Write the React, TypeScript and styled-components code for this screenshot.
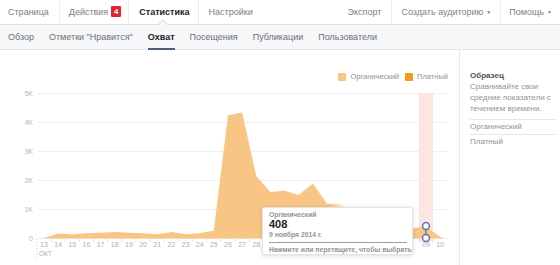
import React from "react";
import styled, { createGlobalStyle } from "styled-components";

const GlobalStyle = createGlobalStyle`
  html, body { margin: 0; padding: 0; background: #fff; }
  body { font-family: "Liberation Sans", Arial, sans-serif; }
  * { box-sizing: border-box; }
`;

const Page = styled.div`
  width: 560px;
  height: 265px;
  overflow: hidden;
  background: #fff;
  display: flex;
  flex-direction: column;
`;

const TopBar = styled.div`
  height: 25px;
  display: flex;
  align-items: stretch;
  background: #fff;
  border-bottom: 1px solid #dddfe2;
  font-size: 9px;
  position: relative;
  z-index: 2;
`;

const TopItem = styled.div<{ $active?: boolean; $sep?: boolean; $pl?: number; $pr?: number }>`
  position: relative;
  display: flex;
  align-items: center;
  padding: 0 ${(p) => p.$pr ?? 10}px 1px ${(p) => p.$pl ?? 10}px;
  color: ${(p) => (p.$active ? "#1d2129" : "#7b7f86")};
  font-weight: ${(p) => (p.$active ? 700 : 400)};
  border-right: ${(p) => (p.$sep ? "1px solid #eceef1" : "none")};
  white-space: nowrap;
  ${(p) =>
    p.$active &&
    `
    &::after {
      content: "";
      position: absolute;
      left: 50%;
      bottom: -1px;
      width: 7px;
      height: 7px;
      margin-left: -4px;
      background: #f6f7f9;
      border-left: 1px solid #dddfe2;
      border-top: 1px solid #dddfe2;
      transform: translateY(4px) rotate(45deg);
    }
  `}
`;

const Badge = styled.span`
  display: inline-flex;
  align-items: center;
  justify-content: center;
  width: 10px;
  height: 11px;
  margin-left: 3px;
  background: #e0262b;
  color: #fff;
  font-size: 8px;
  font-weight: 700;
  border-radius: 1px;
`;

const Spacer = styled.div`
  flex: 1;
`;

const Caret = styled.span`
  font-size: 5px;
  margin-left: 3px;
`;

const SubBar = styled.div`
  height: 25px;
  display: flex;
  align-items: stretch;
  gap: 15px;
  padding-left: 8px;
  background: #f6f7f9;
  border-bottom: 1px solid #e3e5e8;
  font-size: 9px;
`;

const SubTab = styled.div<{ $active?: boolean }>`
  position: relative;
  display: flex;
  align-items: center;
  padding-bottom: 1px;
  color: ${(p) => (p.$active ? "#1d2129" : "#6b6f76")};
  font-weight: ${(p) => (p.$active ? 700 : 400)};
  white-space: nowrap;
  ${(p) =>
    p.$active &&
    `
    &::after {
      content: "";
      position: absolute;
      left: 0;
      right: 0;
      bottom: -1px;
      height: 2px;
      background: #4e5d78;
    }
  `}
`;

const Main = styled.div`
  flex: 1;
  display: flex;
`;

const ChartPanel = styled.div`
  position: relative;
  width: 459px;
  display: flex;
  flex-direction: column;
`;

const LegendRow = styled.div`
  height: 36px;
  display: flex;
  align-items: flex-end;
  justify-content: flex-end;
  padding: 0 11px 5px 0;
  gap: 6px;
  font-size: 7.5px;
  color: #90949c;
`;

const LegendItem = styled.div`
  display: flex;
  align-items: center;
  gap: 4px;
`;

const Swatch = styled.span<{ $color: string }>`
  width: 8px;
  height: 8px;
  border-radius: 1px;
  background: ${(p) => p.$color};
`;

const Tooltip = styled.div`
  position: absolute;
  left: 262px;
  top: 157px;
  width: 151px;
  height: 48px;
  background: #fff;
  border: 1px solid #e3e4e6;
  border-radius: 2px;
  box-shadow: 0 1px 4px rgba(0, 0, 0, 0.14);
  padding: 2px 5px 0 6px;
  display: flex;
  flex-direction: column;
  font-weight: 700;
`;

const TipLabel = styled.div`
  font-size: 6.8px;
  color: #90949c;
  line-height: 9px;
`;

const TipValue = styled.div`
  font-size: 11px;
  color: #1d2129;
  line-height: 11px;
`;

const TipDate = styled.div`
  font-size: 6.8px;
  color: #90949c;
  line-height: 9px;
  padding-bottom: 3px;
  border-bottom: 1px solid #9a9da3;
`;

const TipHint = styled.div`
  font-size: 6.8px;
  color: #90949c;
  line-height: 9px;
  padding-top: 2px;
  white-space: nowrap;
`;

const Sidebar = styled.div`
  flex: 1;
  border-left: 1px solid #e9eaed;
  padding: 21px 4px 0 10px;
  font-size: 8px;
  color: #90949c;
`;

const SideTitle = styled.div`
  font-weight: 700;
  color: #4b4f56;
  line-height: 10px;
`;

const SideText = styled.div`
  line-height: 11px;
  padding-bottom: 5px;
  white-space: nowrap;
`;

const SideRow = styled.div`
  border-top: 1px solid #e5e6e9;
  line-height: 14px;
`;

const base = 152.5;
const unit = 29;
const x0 = 44;
const step = 14.15;
const values = [
  0.02, 0.17, 0.15, 0.18, 0.2, 0.22, 0.2, 0.18, 0.15, 0.22, 0.15, 0.18, 0.28,
  4.25, 4.35, 2.15, 1.6, 1.65, 1.5, 1.9, 1.2, 1.2, 0.8, 0.6, 0.45, 0.4, 0.35,
  0.41, 0.05,
];
const labels = [
  "13", "14", "15", "16", "17", "18", "19", "20", "21", "22", "23", "24", "25",
  "26", "27", "28", "29", "30", "31", "01", "02", "03", "04", "05", "06", "07",
  "08", "09", "10",
];
// labels hidden beneath the tooltip in the reference
const hidden = (i: number) => i >= 16 && i <= 26;

const xs = (i: number) => x0 + i * step;
const ys = (v: number) => base - v * unit;

const areaPath =
  `M40,${base} ` +
  values.map((v, i) => `L${xs(i).toFixed(1)},${ys(v).toFixed(1)}`).join(" ") +
  ` L${(xs(28) + 4).toFixed(1)},${base} Z`;

const font = "Liberation Sans, Arial, sans-serif";

const Chart: React.FC = () => (
  <svg width={459} height={179} viewBox="0 0 459 179" style={{ display: "block" }}>
    <defs>
      <filter id="blur" x="-20%" y="-50%" width="140%" height="200%">
        <feGaussianBlur stdDeviation="3" />
      </filter>
    </defs>
    {[5, 4, 3, 2, 1, 0].map((k) => (
      <g key={k}>
        <line x1={38} x2={448} y1={ys(k)} y2={ys(k)} stroke="#efefef" strokeWidth={1} />
        <text x={33} y={ys(k) + 2.5} textAnchor="end" fontSize={7} fill="#b5b5b5" fontFamily={font}>
          {k === 0 ? "0" : `${k}K`}
        </text>
      </g>
    ))}
    <rect x={419} y={7} width={14} height={149} fill="#fde6e0" />
    <path d={areaPath} fill="#f9c585" />
    <rect x={336} y={112} width={60} height={12} fill="#fff" opacity={0.75} filter="url(#blur)" />
    <line x1={37} x2={37} y1={153} y2={172} stroke="#c8c8c8" strokeDasharray="1 2" />
    {labels.map((l, i) => (
      <g key={l + i}>
        {!hidden(i) && (
          <text x={xs(i)} y={161} textAnchor="middle" fontSize={7} fill="#aeb0b4" fontFamily={font}>
            {l}
          </text>
        )}
        {i < labels.length - 1 && (
          <line
            x1={xs(i) + step / 2}
            x2={xs(i) + step / 2}
            y1={153}
            y2={156}
            stroke="#e2e2e2"
          />
        )}
      </g>
    ))}
    <text x={39} y={170} fontSize={6.5} fill="#aeb0b4" fontFamily={font}>
      ОКТ
    </text>
    <line x1={426} x2={426} y1={140} y2={152} stroke="#6470c4" strokeWidth={1.5} />
    <circle cx={426} cy={140} r={3.4} fill="#fff" stroke="#6470c4" strokeWidth={1.5} />
    <circle cx={426} cy={152} r={3.4} fill="#fff" stroke="#6470c4" strokeWidth={1.5} />
  </svg>
);

export default function App() {
  return (
    <Page>
      <GlobalStyle />
      <TopBar>
        <TopItem $sep $pl={8} $pr={10}>Страница</TopItem>
        <TopItem $sep $pl={9} $pr={7}>
          Действия<Badge>4</Badge>
        </TopItem>
        <TopItem $sep $active $pl={10} $pr={8}>Статистика</TopItem>
        <TopItem $pl={10}>Настройки</TopItem>
        <Spacer />
        <TopItem $sep $pl={10} $pr={10}>Экспорт</TopItem>
        <TopItem $sep $pl={9} $pr={9}>
          Создать аудиторию<Caret>▼</Caret>
        </TopItem>
        <TopItem $pl={8} $pr={8}>
          Помощь<Caret>▼</Caret>
        </TopItem>
      </TopBar>
      <SubBar>
        <SubTab>Обзор</SubTab>
        <SubTab>Отметки "Нравится"</SubTab>
        <SubTab $active>Охват</SubTab>
        <SubTab>Посещения</SubTab>
        <SubTab>Публикации</SubTab>
        <SubTab>Пользователи</SubTab>
      </SubBar>
      <Main>
        <ChartPanel>
          <LegendRow>
            <LegendItem>
              <Swatch $color="#f9c585" />
              Органический
            </LegendItem>
            <LegendItem>
              <Swatch $color="#f6981e" />
              Платный
            </LegendItem>
          </LegendRow>
          <Chart />
          <Tooltip>
            <TipLabel>Органический</TipLabel>
            <TipValue>408</TipValue>
            <TipDate>9 ноября 2014 г.</TipDate>
            <TipHint>Нажмите или перетащите, чтобы выбрать</TipHint>
          </Tooltip>
        </ChartPanel>
        <Sidebar>
          <SideTitle>Образец</SideTitle>
          <SideText>
            Сравнивайте свои
            <br />
            средние показатели с
            <br />
            течением времени.
          </SideText>
          <SideRow>Органический</SideRow>
          <SideRow>Платный</SideRow>
        </Sidebar>
      </Main>
    </Page>
  );
}
